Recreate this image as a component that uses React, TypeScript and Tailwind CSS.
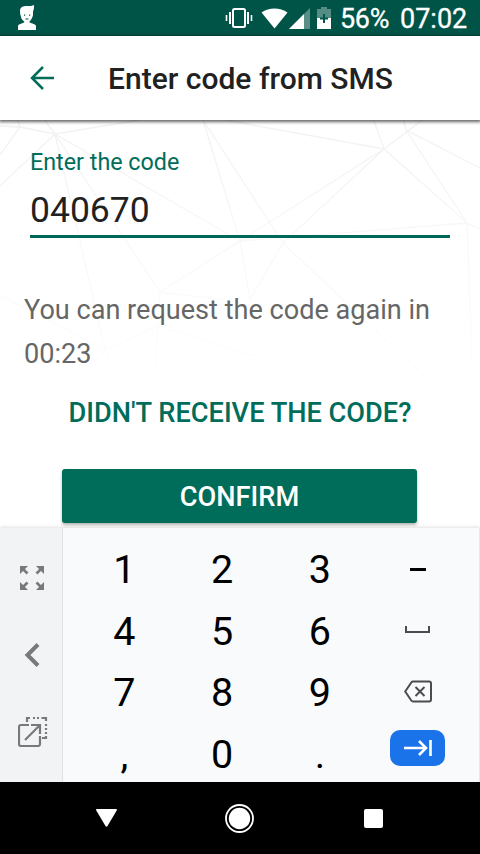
import type { ReactNode } from "react";

function PersonIcon() {
  return (
    <svg width="20" height="26" viewBox="0 0 20 26" fill="white" aria-hidden="true">
      <path d="M3 6 C3 2 6 1 10 1 C13 1 15 1 17 0 C17.500 4 16 5 16 8 V10 C15.500 13 14 15 12.500 16.500 V17.500 C15 18.500 18.500 19 19 21 V25 H1 V21 C1.500 19 5 18.500 7.200 17.500 V16.500 C5 15 4 13 3.800 11 C3 9.500 3.300 8 3 6 Z" />
      <path d="M7 9.500 h1.200 v1.300 h-1.200 Z M12 9.500 h1.200 v1.300 h-1.200 Z M8.500 13.500 h3 v1 h-3 Z" fill="#00574b" />
    </svg>
  );
}

function VibrateIcon() {
  return (
    <svg width="28" height="22" viewBox="0 0 28 22" fill="none" stroke="white" aria-hidden="true">
      <rect x="8" y="2" width="12" height="18" rx="1.5" strokeWidth="2" />
      <path d="M5 5 V17 M23 5 V17" strokeWidth="2" />
      <path d="M1.500 8 V14 M26.500 8 V14" strokeWidth="1.600" />
    </svg>
  );
}

function WifiIcon() {
  return (
    <svg width="27" height="21" viewBox="0 0 27 21" fill="white" aria-hidden="true">
      <path d="M0.500 4.500 C8 -1 19 -1 26.500 4.500 L13.500 20.500 Z" />
    </svg>
  );
}

function SignalIcon() {
  return (
    <svg width="21" height="21" viewBox="0 0 21 21" fill="white" aria-hidden="true">
      <path d="M21 0 V21 H0 Z" opacity="0.35" />
      <path d="M15 6 V21 H0 Z" />
    </svg>
  );
}

function BatteryIcon() {
  return (
    <svg width="14" height="22" viewBox="0 0 14 22" aria-hidden="true">
      <path d="M4 0 H10 V2 H14 V11 H0 V2 H4 Z" fill="#558d84" />
      <path d="M0 11 H14 V22 H0 Z" fill="white" />
      <path d="M7 7 V16 M3 11.500 H11" stroke="#00574b" strokeWidth="2" />
    </svg>
  );
}

function StatusBar() {
  return (
    <header className="flex h-9 items-center bg-[#005447] pl-[17px] pr-3 text-white">
      <PersonIcon />
      <div className="ml-auto flex items-center">
        <VibrateIcon />
        <div className="ml-2">
          <WifiIcon />
        </div>
        <div className="ml-px">
          <SignalIcon />
        </div>
        <div className="ml-[7px]">
          <BatteryIcon />
        </div>
        <span className="ml-[9px] w-[50px] whitespace-nowrap pt-[3px] text-[27px] leading-none tracking-[-0.3px] [-webkit-text-stroke:0.3px_white]">
          56%
        </span>
        <span className="ml-[10px] w-[68px] whitespace-nowrap pt-[3px] text-[27px] leading-none [-webkit-text-stroke:0.3px_white]">
          07:02
        </span>
      </div>
    </header>
  );
}

function Toolbar() {
  return (
    <div className="relative z-10 flex h-[84px] items-center bg-white pl-[30px] shadow-[0_1px_3px_1px_rgba(0,0,0,0.6)]">
      <button type="button" aria-label="Back">
        <svg width="24" height="24" viewBox="0 0 24 24" fill="none" stroke="#006d5b" strokeWidth="2.500" aria-hidden="true">
          <path d="M24 12 H2 M13 1 L2 12 L13 23" />
        </svg>
      </button>
      <h1 className="ml-[54px] whitespace-nowrap pt-0.5 text-[30px] font-medium leading-none text-[#212121]">
        Enter code from SMS
      </h1>
    </div>
  );
}

function MeshBackground() {
  return (
    <svg className="absolute inset-0" width="480" height="408" viewBox="0 120 480 408" fill="none" aria-hidden="true">
      <defs>
        <linearGradient id="mesh-fade" gradientUnits="userSpaceOnUse" x1="0" y1="120" x2="0" y2="420">
          <stop offset="0" stopColor="#f1f1f1" />
          <stop offset="0.400" stopColor="#f8f8f8" />
          <stop offset="1" stopColor="#ffffff" />
        </linearGradient>
      </defs>
      <g stroke="url(#mesh-fade)" strokeWidth="1.300">
        <path d="M0 126 L20 127 L55 134 L200 110 M17 118 L20 127 L0 155 M43 118 L55 134 L0 186" />
        <path d="M55 134 L82 250 L105 350 L125 410 M55 134 L160 292 M55 134 L240 241" />
        <path d="M203 120 L240 241 M203 120 L283 243 M203 116 L384 149" />
        <path d="M373 118 L384 149 L425 118 M384 149 L240 241 M384 149 L283 243 M384 149 L467 223" />
        <path d="M403 118 L406 130 L480 168 M406 130 L467 223 L480 229 M467 223 L472 360 M467 223 L240 241" />
        <path d="M240 241 L160 292 L225 300 M240 241 L250 300 L283 243 L460 410" />
        <path d="M160 292 L158 326 L105 350 L0 295 M158 326 L152 400 M158 326 L400 400 M105 350 L65 390" />
      </g>
    </svg>
  );
}

function CodeForm() {
  return (
    <main className="relative h-[408px] bg-white">
      <MeshBackground />
      <div className="relative flex flex-col">
        <div className="mx-[30px] flex h-[118px] flex-col border-b-3 border-[#006858] pt-[30px]">
          <label htmlFor="code" className="text-[23.300px] leading-6 text-[#006d5b]">
            Enter the code
          </label>
          <input
            id="code"
            defaultValue="040670"
            className="mt-[14px] h-[44px] w-full bg-transparent text-[35.500px] leading-[44px] text-[#212121] outline-none"
          />
        </div>
        <p className="mt-[50px] w-[450px] pl-6 text-[27.100px] leading-[44px] text-[#666666]">
          You can request the code again in 00:23
        </p>
        <button
          type="button"
          className="mx-auto mt-[22px] h-[30px] whitespace-nowrap text-[27.200px] font-medium leading-[30px] text-[#006d5b]"
        >
          DIDN'T RECEIVE THE CODE?
        </button>
        <button
          type="button"
          className="ml-[62px] mt-[41px] h-[54px] w-[355px] rounded-[3px] bg-[#006d5b] pt-1 text-[27.200px] font-medium leading-none text-white shadow-[0_2px_3px_rgba(0,0,0,0.3)]"
        >
          CONFIRM
        </button>
      </div>
    </main>
  );
}

function ExpandIcon() {
  return (
    <svg width="24" height="24" viewBox="0 0 24 24" fill="#77797b" stroke="#77797b" aria-hidden="true">
      <path d="M0 0 H8 L0 8 Z M24 0 V8 L16 0 Z M0 24 V16 L8 24 Z M24 24 H16 L24 16 Z" stroke="none" />
      <path d="M3 3 L7.500 7.500 M21 3 L16.500 7.500 M3 21 L7.500 16.500 M21 21 L16.500 16.500" strokeWidth="2.600" />
    </svg>
  );
}

function CollapseIcon() {
  return (
    <svg width="16" height="24" viewBox="0 0 16 24" fill="none" stroke="#77797b" strokeWidth="4" aria-hidden="true">
      <path d="M14 1.500 L3.500 12 L14 22.500" />
    </svg>
  );
}

function FloatingIcon() {
  return (
    <svg width="30" height="30" viewBox="0 0 30 30" fill="none" stroke="#77797b" strokeWidth="2.200" aria-hidden="true">
      <path d="M11 8 H3 Q1 8 1 10 V27 Q1 29 3 29 H20 Q22 29 22 27 V19" />
      <path d="M7 23 L21 9 M13 8 H22 V17" />
      <path d="M9 5 V1 H12 M15 1 H17 M19 1 H21 M23.500 1 H28 V4 M28 7 V9 M28 11 V13 M28 15 V17 M28 19 V21 H24" />
    </svg>
  );
}

function SpaceIcon() {
  return (
    <svg width="25" height="7" viewBox="0 0 25 7" fill="none" stroke="#4b4c4d" strokeWidth="2" aria-hidden="true">
      <path d="M1 0 V6 H24 V0" />
    </svg>
  );
}

function BackspaceIcon() {
  return (
    <svg width="28" height="23" viewBox="0 0 28 23" fill="none" stroke="#4b4c4d" strokeWidth="2" aria-hidden="true">
      <path d="M9 1.500 H25 Q27 1.500 27 3.500 V19.500 Q27 21.500 25 21.500 H9 Q8 21.500 7.300 20.500 L1.200 11.500 L7.300 2.500 Q8 1.500 9 1.500 Z" />
      <path d="M11.500 7 L20.500 16 M20.500 7 L11.500 16" />
    </svg>
  );
}

function NextIcon() {
  return (
    <svg width="28" height="16" viewBox="0 0 28 16" fill="none" stroke="white" strokeWidth="2.600" aria-hidden="true">
      <path d="M0 8 H22 M15 1 L22 8 L15 15 M26.500 0 V16" />
    </svg>
  );
}

function Key({ children }: { children: ReactNode }) {
  return (
    <button type="button" className="flex h-full w-full items-center justify-center">
      {children}
    </button>
  );
}

const rows: { keys: string[]; action: ReactNode }[] = [
  { keys: ["1", "2", "3"], action: <div className="mb-px h-[3px] w-4 bg-black" /> },
  { keys: ["4", "5", "6"], action: <div className="mb-[3px]"><SpaceIcon /></div> },
  { keys: ["7", "8", "9"], action: <div className="mb-[2px]"><BackspaceIcon /></div> },
  {
    keys: [",", "0", "."],
    action: (
      <span className="mb-[12px] flex h-9 w-[55px] items-center justify-center rounded-[10px] bg-[#1a73e8]">
        <NextIcon />
      </span>
    ),
  },
];

function Keyboard() {
  return (
    <section className="relative z-10 flex h-[254px] bg-[#f8fafb] shadow-[0_-1px_3px_rgba(0,0,0,0.12)]">
      <div className="flex w-[63px] flex-col items-center border-r border-[#e0e3e5] bg-[#f1f3f4] pl-px pt-[38px]">
        <ExpandIcon />
        <div className="mt-[53px]">
          <CollapseIcon />
        </div>
        <div className="mt-[50px] pl-0.5">
          <FloatingIcon />
        </div>
      </div>
      <div className="flex flex-1 flex-col border-r border-[#e5e8ea] pl-[12.500px] pr-[12.500px] pt-[11px]">
        {rows.map((row) => (
          <div key={row.keys.join("")} className="grid h-[61.500px] shrink-0 grid-cols-4 text-[39.500px] leading-none text-black">
            {row.keys.map((key) => (
              <Key key={key}>{key}</Key>
            ))}
            <Key>{row.action}</Key>
          </div>
        ))}
      </div>
    </section>
  );
}

function NavigationBar() {
  return (
    <nav className="relative z-10 flex h-[72px] items-center bg-black pl-24 pr-[97px]">
      <svg width="21" height="18" viewBox="0 0 21 18" fill="white" aria-hidden="true">
        <path d="M1 0 H20 Q21.500 0 20.700 1.500 L11.500 17 Q10.500 18.500 9.500 17 L0.300 1.500 Q-0.500 0 1 0 Z" />
      </svg>
      <svg className="ml-[108px]" width="29" height="29" viewBox="0 0 29 29" aria-hidden="true">
        <circle cx="14.500" cy="14.500" r="13.500" fill="none" stroke="white" strokeWidth="1.800" />
        <circle cx="14.500" cy="14.500" r="10.700" fill="white" />
      </svg>
      <div className="ml-auto h-[19px] w-[19px] rounded-[2px] bg-white" />
    </nav>
  );
}

export default function App() {
  return (
    <div className="flex h-[854px] w-[480px] flex-col overflow-hidden bg-white font-[Roboto,sans-serif]">
      <StatusBar />
      <Toolbar />
      <CodeForm />
      <Keyboard />
      <NavigationBar />
    </div>
  );
}
